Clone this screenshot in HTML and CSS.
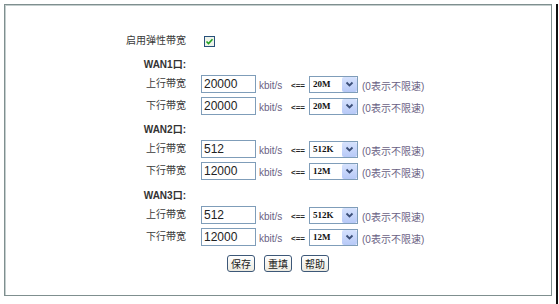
FILE: index.html
```html
<!DOCTYPE html>
<html lang="zh-CN">
<head>
  <meta charset="UTF-8">
  <title>弹性带宽设置</title>
  <link rel="stylesheet" href="styles.css">
</head>
<body>

  <div class="screen">
    <div class="frame">

      <div class="row">
        <span class="label">启用弹性带宽</span>
        <span class="check">
          <svg width="11" height="11" viewBox="0 0 11 11">
            <rect x="0.5" y="0.5" width="10" height="10" fill="#eef3ea" stroke="#27507a"/>
            <path d="M2.5 5.5 L4.5 7.5 L8.5 3.2" fill="none" stroke="#21a121" stroke-width="1.6"/>
          </svg>
        </span>
      </div>

      <!-- WAN1 -->
      <div class="section">
        <div class="head"><span class="label">WAN1口:</span></div>
        <div class="row">
          <span class="label">上行带宽</span>
          <input class="num" type="text" value="20000">
          <span class="unit">kbit/s</span>
          <span class="arrow">&lt;==</span>
          <span class="pick"><select><option>20M</option></select><span class="drop"><svg width="9" height="7" viewBox="0 0 9 7"><path d="M1.5 1.5 L4.5 4.5 L7.5 1.5" fill="none" stroke="#3c4f78" stroke-width="1.8"/></svg></span></span>
          <span class="hint">(0表示不限速)</span>
        </div>
        <div class="row">
          <span class="label">下行带宽</span>
          <input class="num" type="text" value="20000">
          <span class="unit">kbit/s</span>
          <span class="arrow">&lt;==</span>
          <span class="pick"><select><option>20M</option></select><span class="drop"><svg width="9" height="7" viewBox="0 0 9 7"><path d="M1.5 1.5 L4.5 4.5 L7.5 1.5" fill="none" stroke="#3c4f78" stroke-width="1.8"/></svg></span></span>
          <span class="hint">(0表示不限速)</span>
        </div>
      </div>

      <!-- WAN2 -->
      <div class="section">
        <div class="head"><span class="label">WAN2口:</span></div>
        <div class="row">
          <span class="label">上行带宽</span>
          <input class="num" type="text" value="512">
          <span class="unit">kbit/s</span>
          <span class="arrow">&lt;==</span>
          <span class="pick"><select><option>512K</option></select><span class="drop"><svg width="9" height="7" viewBox="0 0 9 7"><path d="M1.5 1.5 L4.5 4.5 L7.5 1.5" fill="none" stroke="#3c4f78" stroke-width="1.8"/></svg></span></span>
          <span class="hint">(0表示不限速)</span>
        </div>
        <div class="row">
          <span class="label">下行带宽</span>
          <input class="num" type="text" value="12000">
          <span class="unit">kbit/s</span>
          <span class="arrow">&lt;==</span>
          <span class="pick"><select><option>12M</option></select><span class="drop"><svg width="9" height="7" viewBox="0 0 9 7"><path d="M1.5 1.5 L4.5 4.5 L7.5 1.5" fill="none" stroke="#3c4f78" stroke-width="1.8"/></svg></span></span>
          <span class="hint">(0表示不限速)</span>
        </div>
      </div>

      <!-- WAN3 -->
      <div class="section last">
        <div class="head"><span class="label">WAN3口:</span></div>
        <div class="row">
          <span class="label">上行带宽</span>
          <input class="num" type="text" value="512">
          <span class="unit">kbit/s</span>
          <span class="arrow">&lt;==</span>
          <span class="pick"><select><option>512K</option></select><span class="drop"><svg width="9" height="7" viewBox="0 0 9 7"><path d="M1.5 1.5 L4.5 4.5 L7.5 1.5" fill="none" stroke="#3c4f78" stroke-width="1.8"/></svg></span></span>
          <span class="hint">(0表示不限速)</span>
        </div>
        <div class="row">
          <span class="label">下行带宽</span>
          <input class="num" type="text" value="12000">
          <span class="unit">kbit/s</span>
          <span class="arrow">&lt;==</span>
          <span class="pick"><select><option>12M</option></select><span class="drop"><svg width="9" height="7" viewBox="0 0 9 7"><path d="M1.5 1.5 L4.5 4.5 L7.5 1.5" fill="none" stroke="#3c4f78" stroke-width="1.8"/></svg></span></span>
          <span class="hint">(0表示不限速)</span>
        </div>
      </div>

      <div class="buttons">
        <button class="btn">保存</button>
        <button class="btn">重填</button>
        <button class="btn">帮助</button>
      </div>

    </div>
  </div>

</body>
</html>
```

FILE: styles.css
```css
body {
  margin: 0;
  padding: 0;
  background-color: #fff;
  font-family: "Liberation Sans", "Noto Sans CJK SC", sans-serif;
  font-size: 10px;
  color: #3a3a3a;
}

.screen {
  width: 556px;
  height: 300px;
  border-right: 2px solid #111;
  border-bottom: 2px solid #111;
}

.frame {
  margin: 4px 0 0 4px;
  width: 548px;
  height: 292px;
  border: 1px solid #7f8f8f;
  box-shadow: inset 1px 1px 0 #c4cece;
  padding-top: 25px;
  box-sizing: border-box;
}

.row {
  display: flex;
  align-items: center;
  height: 22px;
}

.head {
  display: flex;
  align-items: center;
  height: 16px;
  font-weight: bold;
  color: #333;
}

.section {
  margin-top: 5px;
}

.section.last {
  margin-top: 6px;
}

.label {
  width: 80px;
  margin-left: 101px;
  text-align: right;
  line-height: 14px;
  white-space: nowrap;
}

.check {
  display: flex;
  margin-left: 18px;
}

.num {
  margin-left: 15px;
  width: 55px;
  height: 18px;
  box-sizing: border-box;
  border: 1px solid #7f9db9;
  padding: 0 2px;
  font-family: "Liberation Sans", sans-serif;
  font-size: 12px;
  color: #222;
  outline: none;
}

.unit {
  width: 32px;
  margin-left: 3px;
  padding-top: 3px;
  color: #6a5f84;
}

.arrow {
  width: 18px;
  font-family: "Liberation Sans", sans-serif;
  font-size: 8px;
  font-weight: bold;
  color: #222;
  padding-top: 2px;
  white-space: nowrap;
}

.pick {
  position: relative;
  display: inline-block;
  height: 17px;
}

.pick select {
  appearance: none;
  -webkit-appearance: none;
  width: 49px;
  height: 17px;
  box-sizing: border-box;
  border: 1px solid #7f9db9;
  border-radius: 0;
  background: #fff;
  padding: 0 0 0 3px;
  font-family: "Liberation Serif", serif;
  font-size: 9px;
  font-weight: bold;
  color: #111;
}

.drop {
  position: absolute;
  right: 1px;
  top: 1px;
  width: 15px;
  height: 15px;
  border-radius: 2px;
  background: linear-gradient(#d6e2fd, #b7c9f7);
  display: flex;
  align-items: center;
  justify-content: center;
}

.hint {
  margin-left: 4px;
  padding-top: 2px;
  color: #6a5f84;
  white-space: nowrap;
}

.buttons {
  display: flex;
  justify-content: center;
  gap: 9px;
  margin-top: 7px;
}

.btn {
  height: 17px;
  padding: 0 3px;
  border: 1px solid #3d5878;
  border-radius: 3px;
  background: linear-gradient(#ffffff, #eceae0);
  font-family: "Noto Sans CJK SC", sans-serif;
  font-size: 10px;
  line-height: 13px;
  color: #222;
}
```
